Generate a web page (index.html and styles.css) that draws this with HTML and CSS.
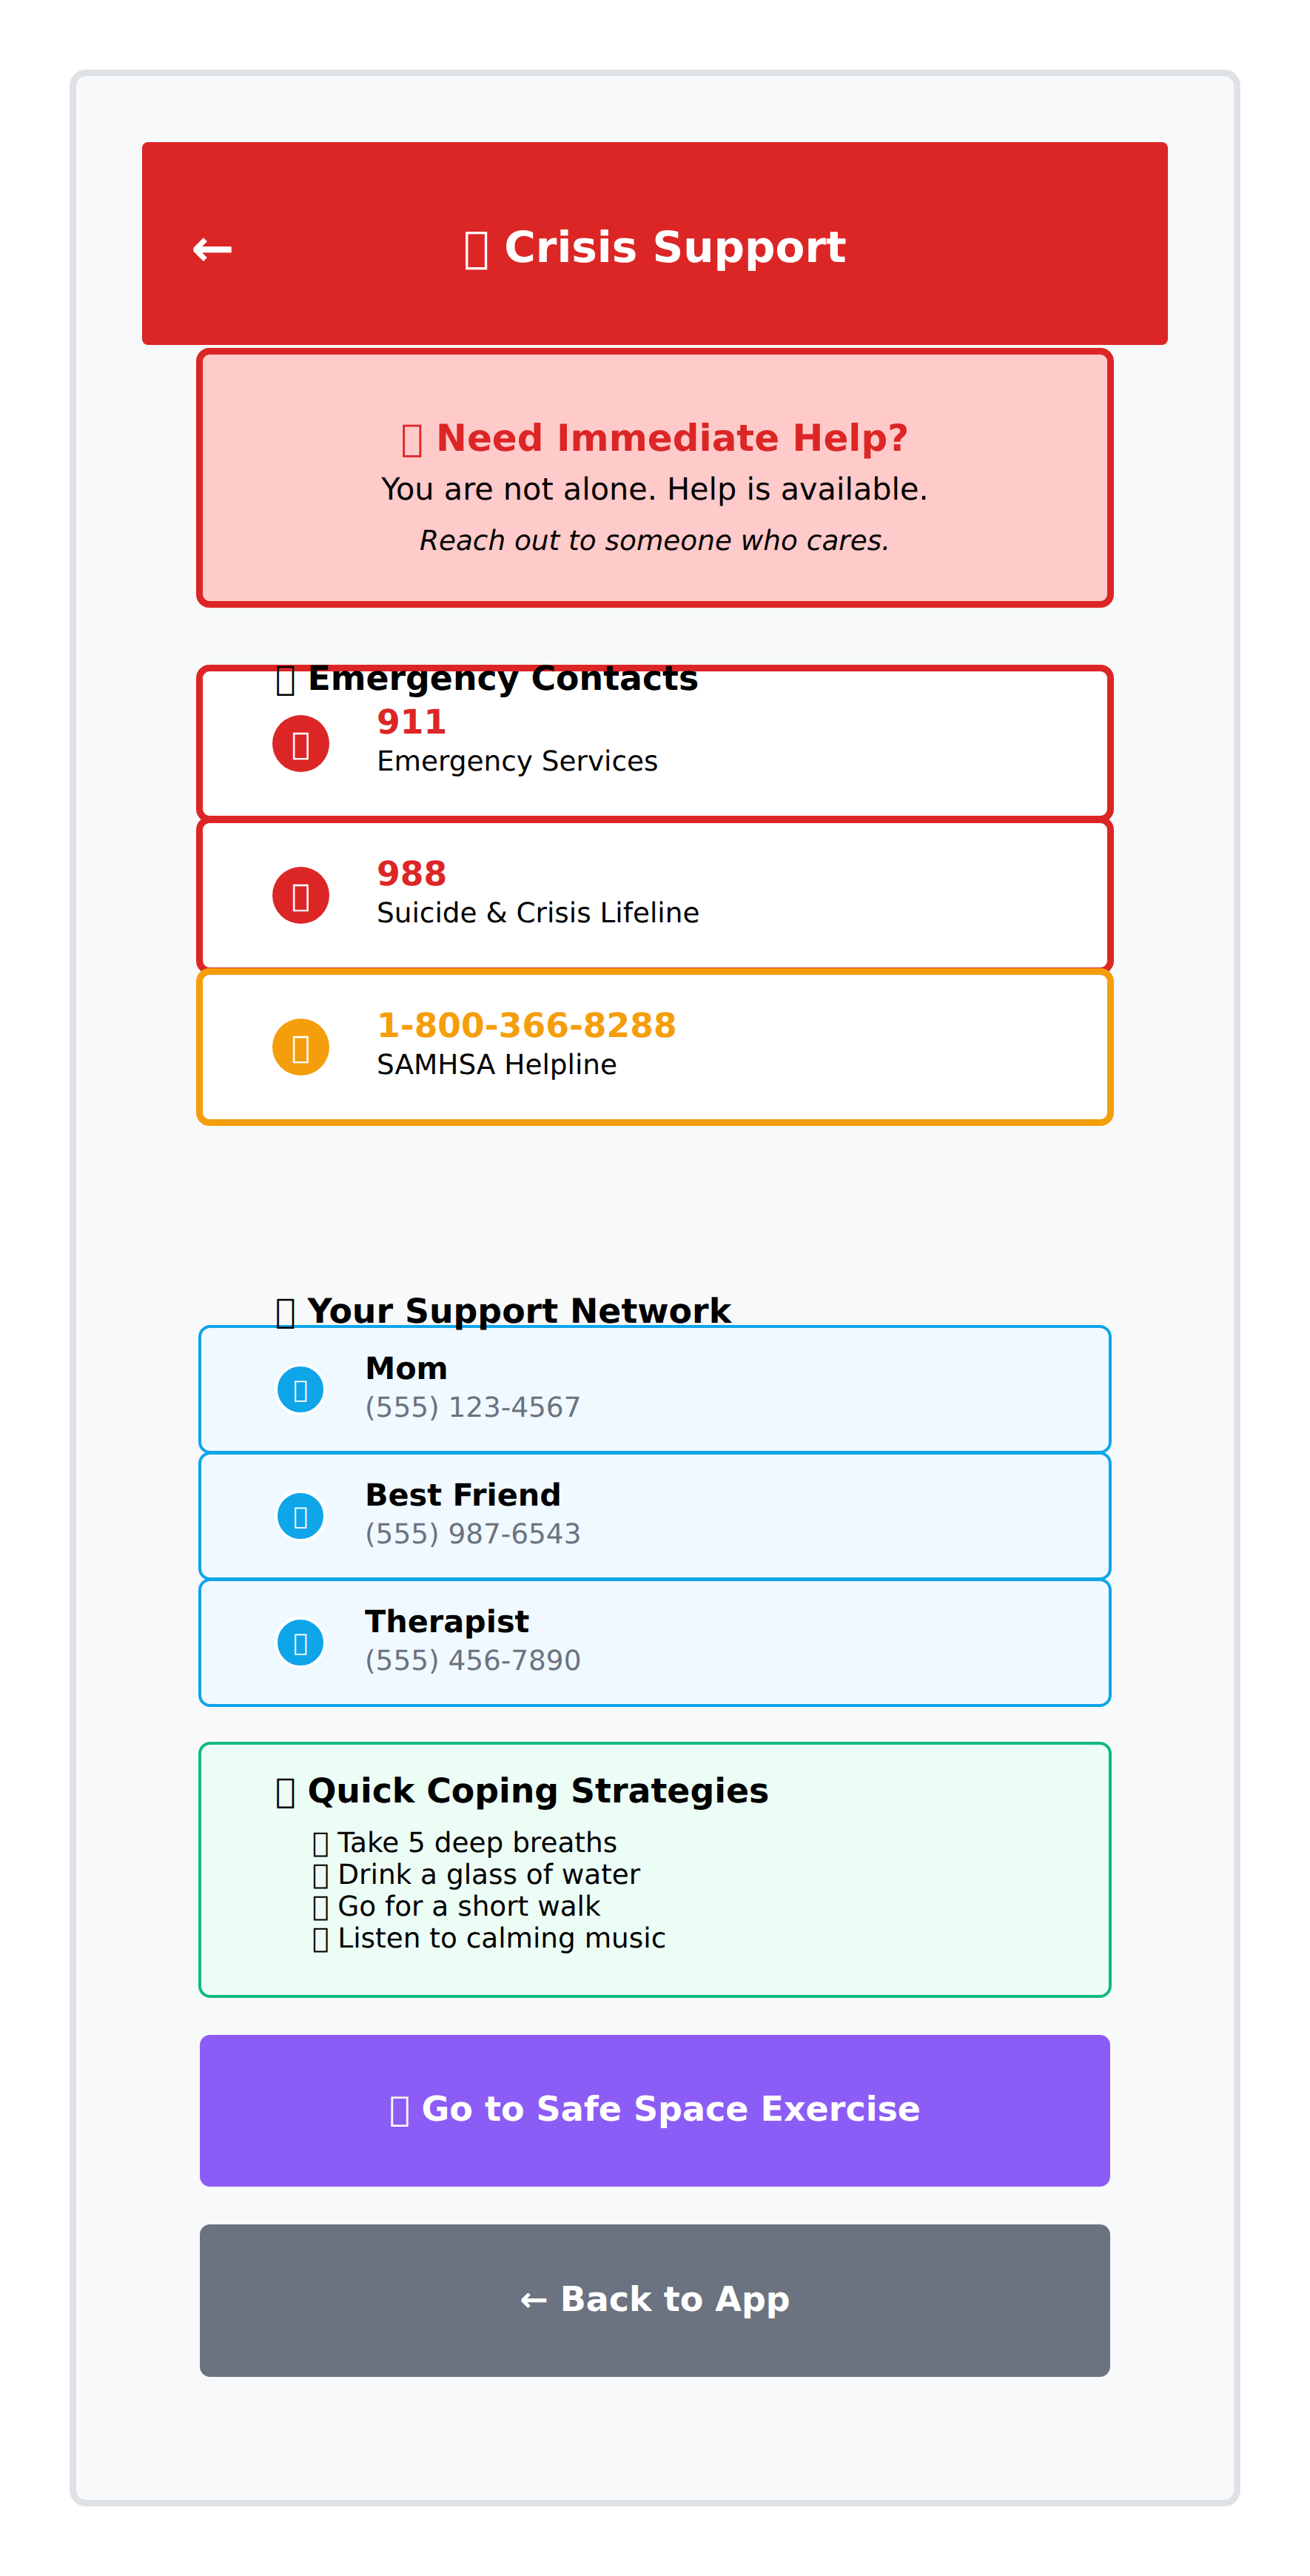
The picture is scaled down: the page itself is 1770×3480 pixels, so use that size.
FILE: index.html
```html
<!DOCTYPE html>
<html lang="en">
<head>
  <meta charset="UTF-8">
  <meta name="viewport" content="width=device-width, initial-scale=1.0">
  <title>Crisis Support</title>
  <link rel="stylesheet" href="styles.css">
</head>

<body>
  <main class="phone">
    <header class="topbar">
      <span class="topbar-back">←</span>
      <h1 class="topbar-title">&#xE000; Crisis Support</h1>
    </header>

    <div class="content">
      <section class="alert">
        <h2 class="alert-title">&#xE000; Need Immediate Help?</h2>
        <p class="alert-text">You are not alone. Help is available.</p>
        <p class="alert-note">Reach out to someone who cares.</p>
      </section>

      <h2 class="section-title section-emergency">&#xE000; Emergency Contacts</h2>
      <div class="hotline hotline-red">
        <span class="hotline-icon">&#xE000;</span>
        <div class="hotline-text">
          <div class="hotline-number">911</div>
          <div class="hotline-name">Emergency Services</div>
        </div>
      </div>
      <div class="hotline hotline-red">
        <span class="hotline-icon">&#xE000;</span>
        <div class="hotline-text">
          <div class="hotline-number">988</div>
          <div class="hotline-name">Suicide &amp; Crisis Lifeline</div>
        </div>
      </div>
      <div class="hotline hotline-orange">
        <span class="hotline-icon">&#xE000;</span>
        <div class="hotline-text">
          <div class="hotline-number">1-800-366-8288</div>
          <div class="hotline-name">SAMHSA Helpline</div>
        </div>
      </div>

      <h2 class="section-title section-network">&#xE000; Your Support Network</h2>
      <div class="person">
        <span class="person-icon">&#xE000;</span>
        <div class="person-text">
          <div class="person-name">Mom</div>
          <div class="person-phone">(555) 123-4567</div>
        </div>
      </div>
      <div class="person">
        <span class="person-icon">&#xE000;</span>
        <div class="person-text">
          <div class="person-name">Best Friend</div>
          <div class="person-phone">(555) 987-6543</div>
        </div>
      </div>
      <div class="person">
        <span class="person-icon">&#xE000;</span>
        <div class="person-text">
          <div class="person-name">Therapist</div>
          <div class="person-phone">(555) 456-7890</div>
        </div>
      </div>

      <section class="coping">
        <h2 class="coping-title">&#xE000; Quick Coping Strategies</h2>
        <ul class="coping-list">
          <li>&#xE000; Take 5 deep breaths</li>
          <li>&#xE000; Drink a glass of water</li>
          <li>&#xE000; Go for a short walk</li>
          <li>&#xE000; Listen to calming music</li>
        </ul>
      </section>

      <button class="action action-purple" type="button">&#xE000; Go to Safe Space Exercise</button>
      <button class="action action-grey" type="button">← Back to App</button>
    </div>
  </main>
</body>
</html>
```

FILE: styles.css
```css
* {
  box-sizing: border-box;
}

body {
  margin: 0;
  background: #fff;
  color: #000;
  font-family: "DejaVu Sans", sans-serif;
  text-rendering: geometricPrecision;
}

h1, h2, p, ul {
  margin: 0;
  padding: 0;
}

.phone {
  height: 3292px;
  margin: 94px;
  padding: 89px;
  background: #f8f9fa;
  border: 9px solid #dee2e6;
  border-radius: 22px;
}

/* header */
.topbar {
  display: grid;
  grid-template-columns: 1fr auto 1fr;
  align-items: center;
  height: 274px;
  padding: 12px 66px 0;
  background: #dc2626;
  border-radius: 8px;
  color: #fff;
}

.topbar-back {
  font-size: 70px;
  font-weight: bold;
  line-height: 1;
}

.topbar-title {
  font-size: 58px;
  font-weight: bold;
  line-height: 1.2;
}

.content {
  padding: 4px 73px 0;
}

/* alert */
.alert {
  height: 351px;
  padding-top: 79px;
  background: #fecaca;
  border: 9px solid #dc2626;
  border-radius: 18px;
  text-align: center;
}

.alert-title {
  color: #dc2626;
  font-size: 50px;
  line-height: 69px;
}

.alert-text {
  font-size: 41.4px;
  line-height: 69px;
}

.alert-note {
  font-size: 37.4px;
  font-style: italic;
  line-height: 69px;
}

.section-title {
  padding-left: 107px;
  font-size: 45.8px;
  line-height: 56px;
}

.section-emergency {
  margin-top: 67px;
  margin-bottom: -46px;
}

.section-network {
  margin-top: 230px;
  margin-bottom: -9px;
}

/* emergency lines */
.hotline {
  display: flex;
  align-items: center;
  gap: 64px;
  height: 213px;
  padding-left: 94px;
  margin-bottom: -8px;
  background: #fff;
  border: 9px solid;
  border-radius: 18px;
}

.hotline-red {
  border-color: #dc2626;
}

.hotline-orange {
  border-color: #f59e0b;
}

.hotline-icon {
  display: flex;
  align-items: center;
  justify-content: center;
  width: 77px;
  height: 77px;
  border-radius: 50%;
  color: #fff;
  font-size: 41.4px;
}

.hotline-red .hotline-icon {
  background: #dc2626;
}

.hotline-orange .hotline-icon {
  background: #f59e0b;
}

.hotline-text {
  padding-bottom: 8px;
}

.hotline-number {
  font-size: 45.6px;
  font-weight: bold;
  line-height: 54px;
}

.hotline-red .hotline-number {
  color: #dc2626;
}

.hotline-orange .hotline-number {
  color: #f59e0b;
}

.hotline-name {
  font-size: 37.4px;
  line-height: 50px;
}

/* support network */
.person {
  display: flex;
  align-items: center;
  gap: 52px;
  height: 174px;
  margin: 0 3px -3px;
  padding-left: 99px;
  background: #f0f9ff;
  border: 4px solid #0ea5e9;
  border-radius: 16px;
}

.person-icon {
  display: flex;
  align-items: center;
  justify-content: center;
  width: 70px;
  height: 70px;
  background: #0ea5e9;
  border: 4px solid #fff;
  border-radius: 50%;
  color: #fff;
  font-size: 32px;
}

.person-text {
  padding-bottom: 4px;
}

.person-name {
  font-size: 41.4px;
  font-weight: bold;
  line-height: 52px;
}

.person-phone {
  color: #6b7280;
  font-size: 37.4px;
  line-height: 52px;
}

/* coping */
.coping {
  height: 346px;
  margin: 50px 3px 0;
  padding: 34px 0 0 100px;
  background: #ecfdf5;
  border: 4px solid #10b981;
  border-radius: 16px;
}

.coping-title {
  font-size: 45.8px;
  line-height: 56px;
}

.coping-list {
  margin: 21px 0 0 50px;
  list-style: none;
  font-size: 37.4px;
  line-height: 43px;
}

/* buttons */
.action {
  display: block;
  width: calc(100% - 10px);
  height: 205px;
  margin: 50px 5px 0;
  padding-bottom: 6px;
  border: none;
  border-radius: 14px;
  color: #fff;
  font-family: inherit;
  font-size: 46px;
  font-weight: bold;
}

.action-purple {
  background: #8b5cf6;
}

.action-grey {
  height: 206px;
  margin-top: 51px;
  background: #6b7280;
}
```
